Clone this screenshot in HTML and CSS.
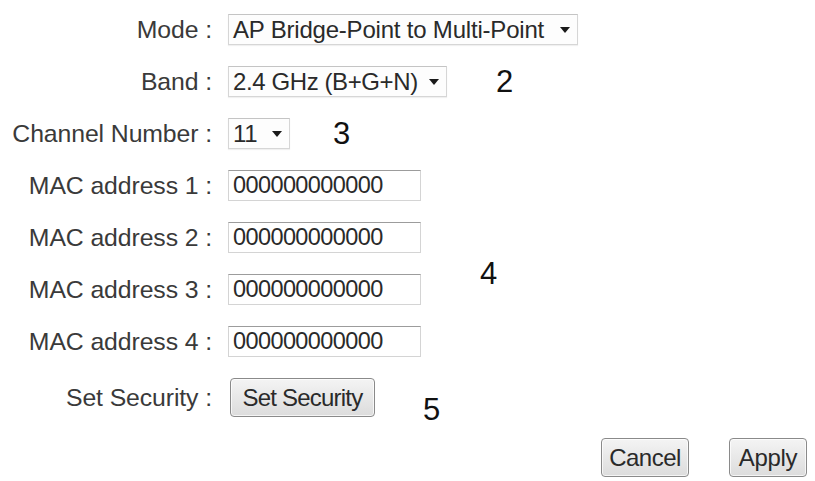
FILE: index.html
```html
<!DOCTYPE html>
<html lang="en">
<head>
<meta charset="utf-8">
<title>Wireless Settings</title>
<link rel="stylesheet" href="styles.css">
</head>
<body>
<div class="form">
  <div class="row">
    <div class="label">Mode :</div>
    <div class="select select-mode"><span class="sel-text">AP Bridge-Point to Multi-Point</span><span class="caret"></span></div>
  </div>
  <div class="row">
    <div class="label">Band :</div>
    <div class="select select-band"><span class="sel-text">2.4 GHz (B+G+N)</span><span class="caret"></span></div>
    <span class="note note-2">2</span>
  </div>
  <div class="row">
    <div class="label">Channel Number :</div>
    <div class="select select-channel"><span class="sel-text">11</span><span class="caret"></span></div>
    <span class="note note-3">3</span>
  </div>
  <div class="group">
    <div class="rows">
      <div class="row">
        <div class="label">MAC address 1 :</div>
        <input class="text" type="text" value="000000000000">
      </div>
      <div class="row">
        <div class="label">MAC address 2 :</div>
        <input class="text" type="text" value="000000000000">
      </div>
      <div class="row">
        <div class="label">MAC address 3 :</div>
        <input class="text" type="text" value="000000000000">
      </div>
      <div class="row">
        <div class="label">MAC address 4 :</div>
        <input class="text" type="text" value="000000000000">
      </div>
    </div>
    <span class="note note-4">4</span>
  </div>
  <div class="row row-btn">
    <div class="label">Set Security :</div>
    <button class="btn btn-sec" type="button">Set Security</button>
    <span class="note note-5">5</span>
  </div>
  <div class="actions">
    <button class="btn btn-cancel" type="button">Cancel</button>
    <button class="btn btn-apply" type="button">Apply</button>
  </div>
</div>
</body>
</html>
```
FILE: styles.css
```css
html, body {
  margin: 0;
  padding: 0;
  background: #ffffff;
}

body {
  font-family: "Liberation Sans", Arial, sans-serif;
  color: #3a3a3a;
}

.form {
  padding-top: 14px;
  display: flex;
  flex-direction: column;
  gap: 21px;
}

.row {
  display: flex;
  align-items: center;
  height: 31px;
}

.rows {
  display: flex;
  flex-direction: column;
  gap: 21px;
}

.group {
  display: flex;
  align-items: center;
}

.label {
  width: 212px;
  flex: none;
  text-align: right;
  font-size: 24.8px;
  letter-spacing: -0.1px;
  color: #3a3a3a;
  margin-right: 16px;
  white-space: nowrap;
}

.select {
  box-sizing: border-box;
  height: 31px;
  display: flex;
  align-items: center;
  justify-content: space-between;
  padding: 0 7px 0 4px;
  border: 1px solid #d6d6d6;
  border-top-color: #c4c4c4;
  background: #fdfdfd;
  box-shadow: 0 1px 1px rgba(0,0,0,0.06);
  font-size: 24px;
  letter-spacing: -0.2px;
  color: #2a2a2a;
  white-space: nowrap;
}

.select-mode { width: 350px; }
.select-band { width: 219px; letter-spacing: -0.4px; }
.select-channel { width: 62px; }

.caret {
  width: 0;
  height: 0;
  border-left: 5px solid transparent;
  border-right: 5px solid transparent;
  border-top: 6px solid #1a1a1a;
  margin-left: 8px;
}

.text {
  box-sizing: border-box;
  width: 193px;
  height: 31px;
  margin: 0;
  padding: 0 4px;
  border: 1px solid #d4d4d4;
  border-top-color: #9c9c9c;
  background: #ffffff;
  font-family: "Liberation Sans", Arial, sans-serif;
  font-size: 23.5px;
  letter-spacing: -0.6px;
  color: #2a2a2a;
  outline: none;
}

.note {
  font-size: 31px;
  color: #111111;
  line-height: 1;
}

.note-2 { margin-left: 49px; }
.note-3 { margin-left: 43px; }
.note-4 { margin-left: 59px; margin-top: 20px; }
.note-5 { margin-left: 48px; margin-top: 24px; }

.row-btn { height: 39px; }

.btn {
  box-sizing: border-box;
  height: 39px;
  margin: 0;
  padding: 0 4px;
  border: 1px solid #8a8a8a;
  border-radius: 4px;
  background: linear-gradient(#f4f4f4, #dcdcdc);
  box-shadow: inset 0 0 0 1px rgba(255,255,255,0.7);
  font-family: "Liberation Sans", Arial, sans-serif;
  font-size: 24px;
  color: #2a2a2a;
}

.btn-sec { width: 145px; margin-left: 2px; letter-spacing: -0.8px; }
.btn-cancel { width: 88px; letter-spacing: -0.5px; }
.btn-apply { width: 78px; letter-spacing: -0.3px; }

.actions {
  display: flex;
  justify-content: flex-end;
  gap: 40px;
  padding-right: 8px;
}
```
